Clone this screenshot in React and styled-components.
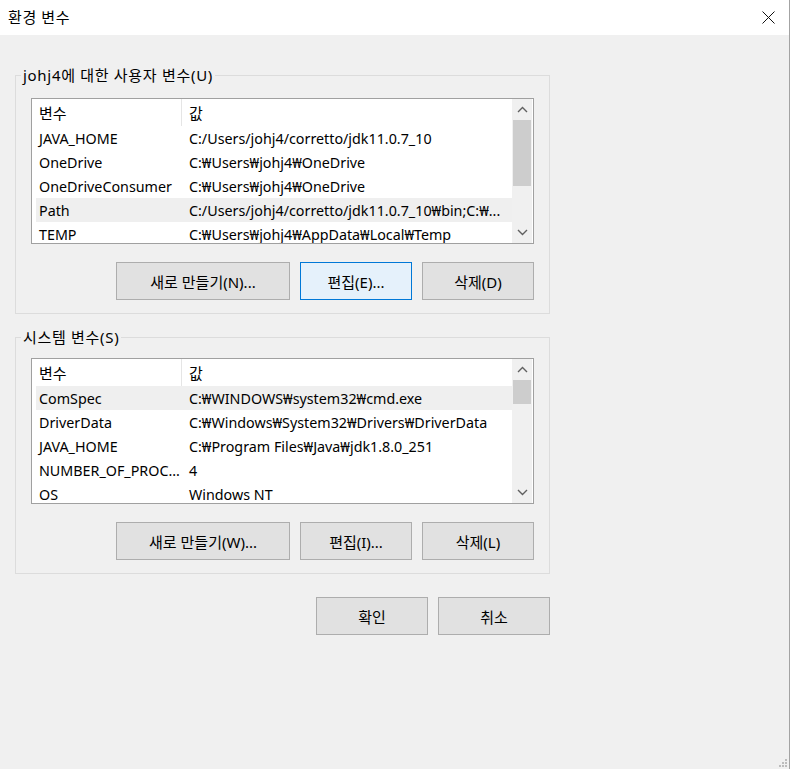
import styled, { createGlobalStyle } from "styled-components";

const GlobalStyle = createGlobalStyle`
    html, body {
        margin: 0;
        padding: 0;
        background: #ffffff;
    }
    * {
        box-sizing: border-box;
    }
`;

const FONT = `"Noto Sans", "Noto Sans CJK KR", sans-serif`;

const Window = styled.div`
    position: relative;
    display: flex;
    flex-direction: column;
    width: 790px;
    height: 769px;
    background: #f0f0f0;
    border-right: 1px solid #a3a3a3;
    font-family: ${FONT};
    font-size: 15px;
    color: #000;
`;

const TitleBar = styled.div`
    display: flex;
    align-items: center;
    justify-content: space-between;
    height: 35px;
    flex-shrink: 0;
    padding: 0 14px 0 8px;
    background: #ffffff;
`;

const Title = styled.div`
    font-size: 15px;
    line-height: 20px;
    letter-spacing: 0.6px;
    margin-top: -2px;
`;

const Body = styled.div`
    display: flex;
    flex-direction: column;
    padding: 30px 0 0 15px;
`;

const Group = styled.fieldset`
    width: 535px;
    margin: ${(p) => p.$top}px 0 0 0;
    border: 1px solid #dcdcdc;
    padding: ${(p) => p.$padTop}px 15px 13px 5px;
    min-width: 0;
`;

const Legend = styled.legend`
    padding: 0 2px;
    font-size: 15px;
    line-height: 20px;
    letter-spacing: 0.7px;
`;

const Inner = styled.div`
    display: flex;
    flex-direction: column;
    gap: 18px;
    padding-left: 10px;
`;

const ListBox = styled.div`
    display: flex;
    height: 146px;
    border: 1px solid #a0a0a0;
    background: #ffffff;
    overflow: hidden;
    font-size: 14.3px;
`;

const Rows = styled.div`
    flex: 1;
    display: flex;
    flex-direction: column;
    overflow: hidden;
`;

const HeaderRow = styled.div`
    display: flex;
    flex-shrink: 0;
    height: 27px;
    align-items: center;
`;

const HeaderCell = styled.div`
    display: flex;
    align-items: center;
    height: 100%;
    width: ${(p) => (p.$first ? "150px" : "auto")};
    padding-left: 7px;
    border-right: ${(p) => (p.$first ? "1px solid #e5e5e5" : "none")};
    font-size: 15px;
    line-height: 20px;
`;

const Row = styled.div`
    display: flex;
    flex-shrink: 0;
    align-items: center;
    height: 24px;
    margin-left: 4px;
    background: ${(p) => (p.$selected ? "#efefef" : "transparent")};
    white-space: nowrap;
`;

const NameCell = styled.div`
    width: 150px;
    padding-left: 3px;
    overflow: hidden;
`;

const ValueCell = styled.div`
    flex: 1;
    padding-left: 3px;
`;

const ScrollBar = styled.div`
    display: flex;
    flex-direction: column;
    width: 20px;
    margin-right: 1px;
    background: #f0f0f0;
    flex-shrink: 0;
`;

const ArrowBox = styled.div`
    display: flex;
    align-items: center;
    justify-content: center;
    height: 21px;
    flex-shrink: 0;
`;

const Track = styled.div`
    flex: 1;
    display: flex;
    flex-direction: column;
    padding: 0 1px;
`;

const Thumb = styled.div`
    height: ${(p) => p.$h}px;
    background: #cdcdcd;
`;

const ButtonRow = styled.div`
    display: flex;
    justify-content: flex-end;
    gap: 10px;
`;

const Button = styled.button`
    width: ${(p) => p.$w || 112}px;
    height: 38px;
    padding: 0;
    font-family: ${FONT};
    font-size: 15px;
    color: #000;
    background: ${(p) => (p.$focused ? "#e5f1fb" : "#e1e1e1")};
    border: 1px solid ${(p) => (p.$focused ? "#0078d7" : "#adadad")};
    border-radius: 0;
`;

const FooterRow = styled.div`
    display: flex;
    gap: 10px;
    width: 535px;
    justify-content: flex-end;
    margin-top: 23px;
`;

const Grip = styled.svg`
    position: absolute;
    right: 2px;
    bottom: 2px;
`;

const userVars = [
    ["JAVA_HOME", "C:/Users/johj4/corretto/jdk11.0.7_10"],
    ["OneDrive", "C:₩Users₩johj4₩OneDrive"],
    ["OneDriveConsumer", "C:₩Users₩johj4₩OneDrive"],
    ["Path", "C:/Users/johj4/corretto/jdk11.0.7_10₩bin;C:₩...", true],
    ["TEMP", "C:₩Users₩johj4₩AppData₩Local₩Temp"],
];

const systemVars = [
    ["ComSpec", "C:₩WINDOWS₩system32₩cmd.exe", true],
    ["DriverData", "C:₩Windows₩System32₩Drivers₩DriverData"],
    ["JAVA_HOME", "C:₩Program Files₩Java₩jdk1.8.0_251"],
    ["NUMBER_OF_PROC...", "4"],
    ["OS", "Windows NT"],
];

const Chevron = ({ up }) => (
    <svg width="11" height="7" viewBox="0 0 11 7">
        <path
            d={up ? "M1 6 L5.5 1.5 L10 6" : "M1 1 L5.5 5.5 L10 1"}
            fill="none"
            stroke="#606060"
            strokeWidth="1.4"
        />
    </svg>
);

const VarList = ({ items, thumbH }) => (
    <ListBox>
        <Rows>
            <HeaderRow>
                <HeaderCell $first>변수</HeaderCell>
                <HeaderCell>값</HeaderCell>
            </HeaderRow>
            {items.map(([name, value, sel], i) => (
                <Row key={i} $selected={sel}>
                    <NameCell>{name}</NameCell>
                    <ValueCell>{value}</ValueCell>
                </Row>
            ))}
        </Rows>
        <ScrollBar>
            <ArrowBox>
                <Chevron up />
            </ArrowBox>
            <Track>
                <Thumb $h={thumbH} />
            </Track>
            <ArrowBox>
                <Chevron />
            </ArrowBox>
        </ScrollBar>
    </ListBox>
);

const App = () => {
    return (
        <Window>
            <GlobalStyle />
            <TitleBar>
                <Title>환경 변수</Title>
                <svg width="13" height="13" viewBox="0 0 13 13">
                    <path d="M0.5 0.5 L12.5 12.5 M12.5 0.5 L0.5 12.5" stroke="#111" strokeWidth="1" />
                </svg>
            </TitleBar>
            <Body>
                <Group $top={0} $padTop={13}>
                    <Legend>johj4에 대한 사용자 변수(U)</Legend>
                    <Inner>
                        <VarList items={userVars} thumbH={66} />
                        <ButtonRow>
                            <Button $w={174}>새로 만들기(N)...</Button>
                            <Button $focused>편집(E)...</Button>
                            <Button>삭제(D)</Button>
                        </ButtonRow>
                    </Inner>
                </Group>
                <Group $top={13} $padTop={11}>
                    <Legend>시스템 변수(S)</Legend>
                    <Inner>
                        <VarList items={systemVars} thumbH={24} />
                        <ButtonRow>
                            <Button $w={174}>새로 만들기(W)...</Button>
                            <Button>편집(I)...</Button>
                            <Button>삭제(L)</Button>
                        </ButtonRow>
                    </Inner>
                </Group>
                <FooterRow>
                    <Button>확인</Button>
                    <Button>취소</Button>
                </FooterRow>
            </Body>
            <Grip width="10" height="10" viewBox="0 0 10 10">
                <rect x="8" y="2" width="2" height="2" fill="#bcbcbc" />
                <rect x="5" y="5" width="2" height="2" fill="#bcbcbc" />
                <rect x="8" y="5" width="2" height="2" fill="#bcbcbc" />
                <rect x="2" y="8" width="2" height="2" fill="#bcbcbc" />
                <rect x="5" y="8" width="2" height="2" fill="#bcbcbc" />
                <rect x="8" y="8" width="2" height="2" fill="#bcbcbc" />
            </Grip>
        </Window>
    );
};

export default App;
